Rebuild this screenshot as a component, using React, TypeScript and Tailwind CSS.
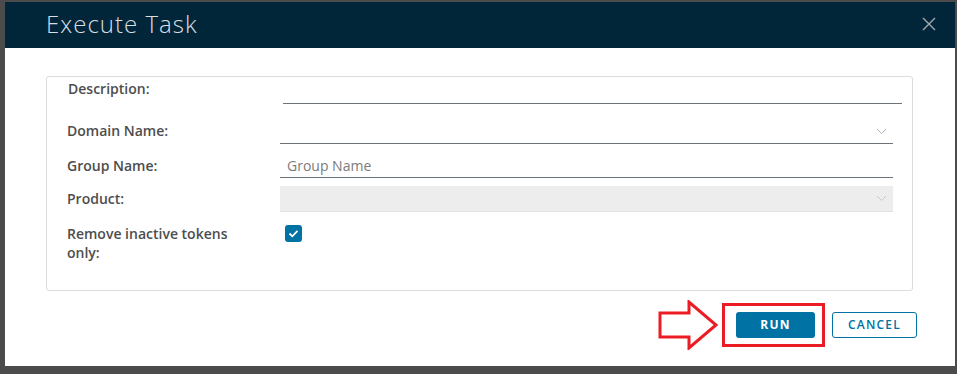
import React from 'react';

const Chevron: React.FC<{ className?: string }> = ({ className }) => (
  <svg width="11" height="7" viewBox="0 0 11 7" className={className}>
    <path d="M1 1l4.5 4.5L10 1" fill="none" stroke="currentColor" strokeWidth="1" />
  </svg>
);

const App: React.FC = () => {
  return (
    <div
      className="w-[957px] h-[374px] bg-[#4b4b4b] pl-[5px] pt-[2px] overflow-hidden"
      style={{ fontFamily: '"Open Sans", "Noto Sans", sans-serif' }}
    >
      <div className="w-[950px] h-[364px] bg-white flex flex-col">
        {/* Header */}
        <div className="h-[46px] bg-[#01263a] flex items-center justify-between pl-[41px] pr-[19px]">
          <h2 className="text-[24px] font-light text-[#d9dee1] tracking-[1px] mt-[-2px]">Execute Task</h2>
          <svg width="14" height="14" viewBox="0 0 14 14" className="text-[#a3a9ad] mt-[-2px]">
            <path d="M1 1l12 12M13 1L1 13" stroke="currentColor" strokeWidth="1.4" />
          </svg>
        </div>

        {/* Form */}
        <div className="ml-[41px] mt-[28px] w-[867px] h-[215px] border border-[#dcdcdc] rounded-[3px] pl-[20px] pr-[19px] text-[14px] text-[#4d4d4d]">
          {/* Description */}
          <div className="flex h-[27px]">
            <div className="w-[213px] font-semibold pt-[1px] pl-[1px]">Description:</div>
            <div className="flex-1 ml-[3px] mr-[-9px] border-b border-[#6c7479]"></div>
          </div>

          {/* Domain */}
          <div className="flex items-center mt-[15px]">
            <div className="w-[213px] font-semibold pb-[2px]">Domain Name:</div>
            <div className="flex-1 h-[25px] border-b border-[#6c7479] flex items-center justify-end pr-[6px] text-[#b5b5b5]">
              <Chevron />
            </div>
          </div>

          {/* Group */}
          <div className="flex items-center mt-[10px]">
            <div className="w-[213px] font-semibold pb-[2px]">Group Name:</div>
            <div className="flex-1 h-[24px] border-b border-[#6c7479] flex items-center pl-[7px] pb-[1px] text-[#7b7b7b]">
              Group Name
            </div>
          </div>

          {/* Product */}
          <div className="flex items-center mt-[8px]">
            <div className="w-[213px] font-semibold pb-[2px]">Product:</div>
            <div className="flex-1 h-[26px] bg-[#ededed] border-b border-[#e2e2e2] flex items-center justify-end pr-[6px] text-[#c8c8c8]">
              <Chevron />
            </div>
          </div>

          {/* Checkbox */}
          <div className="flex mt-[12px]">
            <div className="w-[213px] font-semibold leading-[19px]">
              Remove inactive tokens
              <br />
              only:
            </div>
            <div className="pt-[1px] pl-[5px]">
              <div className="w-[17px] h-[17px] rounded-[3px] bg-[#0072a3] flex items-center justify-center">
                <svg width="11" height="9" viewBox="0 0 11 9">
                  <path d="M1.5 4.5l2.8 2.8L9.5 1.8" fill="none" stroke="white" strokeWidth="1.8" />
                </svg>
              </div>
            </div>
          </div>
        </div>

        {/* Footer */}
        <div className="flex items-center justify-end pr-[38px] mt-[9px]">
          <svg width="62" height="50" viewBox="0 0 62 50" className="mr-[3px]">
            <path
              d="M3 13h29V2l27 23-27 23V37H3z"
              fill="none"
              stroke="#ec1c24"
              strokeWidth="3"
              strokeLinejoin="miter"
            />
          </svg>
          <div className="border-[3px] border-[#ec1c24] w-[103px] h-[44px] flex items-center pl-[11px]">
            <button className="w-[79px] h-[26px] rounded-[3px] bg-[#0072a3] text-white text-[12px] font-bold tracking-[1.2px]">
              RUN
            </button>
          </div>
          <button className="ml-[7px] w-[85px] h-[26px] rounded-[3px] border border-[#0072a3] text-[#0072a3] text-[12px] font-semibold tracking-[1.2px] bg-white">
            CANCEL
          </button>
        </div>
      </div>
    </div>
  );
};

export default App;
